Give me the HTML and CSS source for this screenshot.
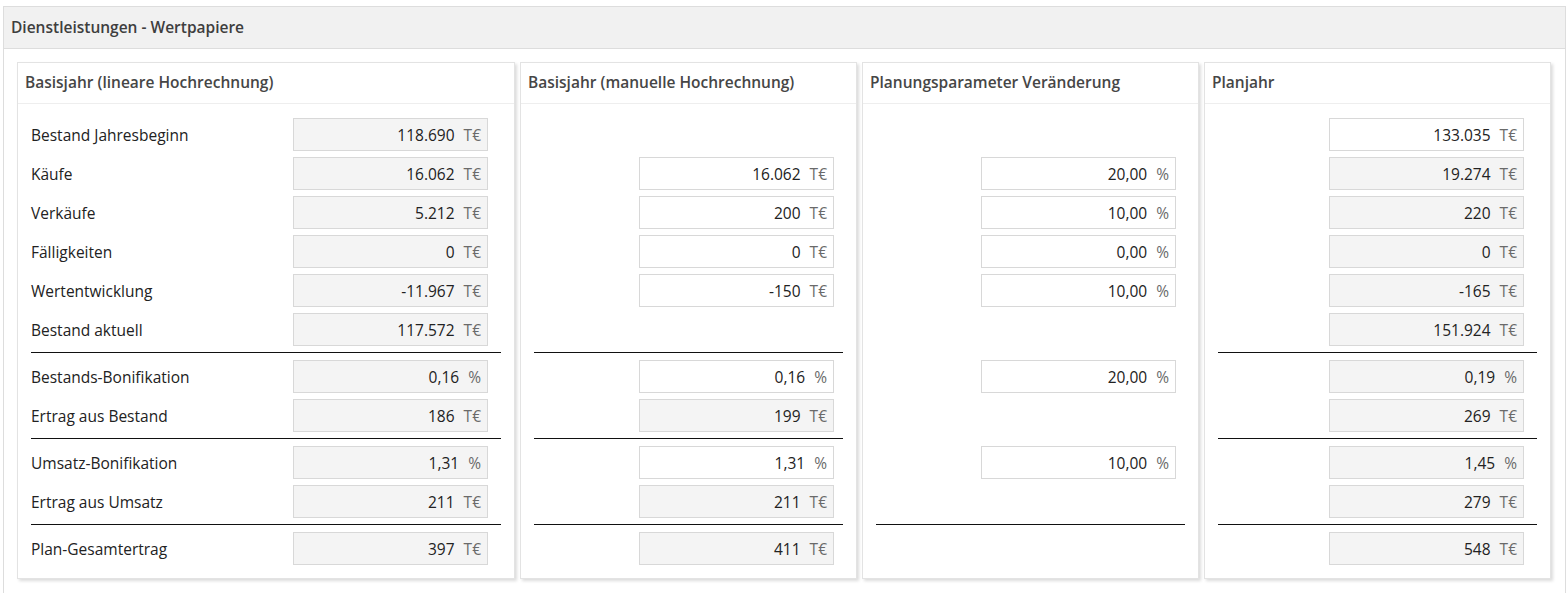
FILE: index.html
```html
<!DOCTYPE html>
<html lang="de">
<head>
    <meta charset="UTF-8">
    <meta name="viewport" content="width=device-width, initial-scale=1.0">
    <title>Dienstleistungen - Wertpapiere</title>
    <link rel="stylesheet" href="styles.css">
</head>
<body>
    <div class="card">
        <div class="card-head">Dienstleistungen - Wertpapiere</div>
        <div class="card-body">

            <!-- Basisjahr linear -->
            <div class="panel panel-base">
                <div class="panel-head">Basisjahr (lineare Hochrechnung)</div>
                <div class="panel-body">
                    <div class="row"><span class="label">Bestand Jahresbeginn</span><div class="field ro"><span class="num">118.690</span><span class="unit">T€</span></div></div>
                    <div class="row"><span class="label">Käufe</span><div class="field ro"><span class="num">16.062</span><span class="unit">T€</span></div></div>
                    <div class="row"><span class="label">Verkäufe</span><div class="field ro"><span class="num">5.212</span><span class="unit">T€</span></div></div>
                    <div class="row"><span class="label">Fälligkeiten</span><div class="field ro"><span class="num">0</span><span class="unit">T€</span></div></div>
                    <div class="row"><span class="label">Wertentwicklung</span><div class="field ro"><span class="num">-11.967</span><span class="unit">T€</span></div></div>
                    <div class="row"><span class="label">Bestand aktuell</span><div class="field ro"><span class="num">117.572</span><span class="unit">T€</span></div></div>
                    <div class="sep"></div>
                    <div class="row"><span class="label">Bestands-Bonifikation</span><div class="field ro"><span class="num">0,16</span><span class="unit">%</span></div></div>
                    <div class="row"><span class="label">Ertrag aus Bestand</span><div class="field ro"><span class="num">186</span><span class="unit">T€</span></div></div>
                    <div class="sep"></div>
                    <div class="row"><span class="label">Umsatz-Bonifikation</span><div class="field ro"><span class="num">1,31</span><span class="unit">%</span></div></div>
                    <div class="row"><span class="label">Ertrag aus Umsatz</span><div class="field ro"><span class="num">211</span><span class="unit">T€</span></div></div>
                    <div class="sep"></div>
                    <div class="row"><span class="label">Plan-Gesamtertrag</span><div class="field ro"><span class="num">397</span><span class="unit">T€</span></div></div>
                </div>
            </div>

            <!-- Basisjahr manuell -->
            <div class="panel panel-narrow">
                <div class="panel-head">Basisjahr (manuelle Hochrechnung)</div>
                <div class="panel-body">
                    <div class="row"></div>
                    <div class="row"><div class="field"><span class="num">16.062</span><span class="unit">T€</span></div></div>
                    <div class="row"><div class="field"><span class="num">200</span><span class="unit">T€</span></div></div>
                    <div class="row"><div class="field"><span class="num">0</span><span class="unit">T€</span></div></div>
                    <div class="row"><div class="field"><span class="num">-150</span><span class="unit">T€</span></div></div>
                    <div class="row"></div>
                    <div class="sep"></div>
                    <div class="row"><div class="field"><span class="num">0,16</span><span class="unit">%</span></div></div>
                    <div class="row"><div class="field ro"><span class="num">199</span><span class="unit">T€</span></div></div>
                    <div class="sep"></div>
                    <div class="row"><div class="field"><span class="num">1,31</span><span class="unit">%</span></div></div>
                    <div class="row"><div class="field ro"><span class="num">211</span><span class="unit">T€</span></div></div>
                    <div class="sep"></div>
                    <div class="row"><div class="field ro"><span class="num">411</span><span class="unit">T€</span></div></div>
                </div>
            </div>

            <!-- Planungsparameter -->
            <div class="panel panel-narrow">
                <div class="panel-head">Planungsparameter Veränderung</div>
                <div class="panel-body">
                    <div class="row"></div>
                    <div class="row"><div class="field"><span class="num">20,00</span><span class="unit">%</span></div></div>
                    <div class="row"><div class="field"><span class="num">10,00</span><span class="unit">%</span></div></div>
                    <div class="row"><div class="field"><span class="num">0,00</span><span class="unit">%</span></div></div>
                    <div class="row"><div class="field"><span class="num">10,00</span><span class="unit">%</span></div></div>
                    <div class="row"></div>
                    <div class="sep blank"></div>
                    <div class="row"><div class="field"><span class="num">20,00</span><span class="unit">%</span></div></div>
                    <div class="row"></div>
                    <div class="sep blank"></div>
                    <div class="row"><div class="field"><span class="num">10,00</span><span class="unit">%</span></div></div>
                    <div class="row"></div>
                    <div class="sep"></div>
                    <div class="row"></div>
                </div>
            </div>

            <!-- Planjahr -->
            <div class="panel panel-plan">
                <div class="panel-head">Planjahr</div>
                <div class="panel-body">
                    <div class="row"><div class="field"><span class="num">133.035</span><span class="unit">T€</span></div></div>
                    <div class="row"><div class="field ro"><span class="num">19.274</span><span class="unit">T€</span></div></div>
                    <div class="row"><div class="field ro"><span class="num">220</span><span class="unit">T€</span></div></div>
                    <div class="row"><div class="field ro"><span class="num">0</span><span class="unit">T€</span></div></div>
                    <div class="row"><div class="field ro"><span class="num">-165</span><span class="unit">T€</span></div></div>
                    <div class="row"><div class="field ro"><span class="num">151.924</span><span class="unit">T€</span></div></div>
                    <div class="sep"></div>
                    <div class="row"><div class="field ro"><span class="num">0,19</span><span class="unit">%</span></div></div>
                    <div class="row"><div class="field ro"><span class="num">269</span><span class="unit">T€</span></div></div>
                    <div class="sep"></div>
                    <div class="row"><div class="field ro"><span class="num">1,45</span><span class="unit">%</span></div></div>
                    <div class="row"><div class="field ro"><span class="num">279</span><span class="unit">T€</span></div></div>
                    <div class="sep"></div>
                    <div class="row"><div class="field ro"><span class="num">548</span><span class="unit">T€</span></div></div>
                </div>
            </div>

        </div>
    </div>
</body>
</html>
```

FILE: styles.css
```css
* {
    margin: 0;
    padding: 0;
    box-sizing: border-box;
    font-family: 'Open Sans', 'Liberation Sans', sans-serif;
}
body {
    background: #fff;
    color: #222;
    font-size: 15.5px;
}
.card {
    margin: 6px 0 0 3px;
    width: 1563px;
    border: 1px solid #ddd;
}
.card-head {
    height: 42px;
    padding: 0 7px 1px;
    display: flex;
    align-items: center;
    background: #f1f1f1;
    border-bottom: 1px solid #ddd;
    font-weight: 600;
    color: #3e3e3e;
}
.card-body {
    display: flex;
    gap: 5px;
    padding: 13px 14px 20px 13px;
}
.panel {
    border: 1px solid #e3e3e3;
    box-shadow: 2px 2px 3px rgba(0, 0, 0, 0.14);
    background: #fff;
}
.panel-base { width: 498px; }
.panel-narrow { width: 337px; }
.panel-plan { width: 347px; }
.panel-head {
    height: 41px;
    padding: 0 7px 2px;
    display: flex;
    align-items: center;
    border-bottom: 1px solid #eee;
    font-weight: 600;
    color: #464646;
}
.panel-body {
    padding: 14px 13px 13px;
}
.row {
    display: flex;
    align-items: center;
    height: 33px;
    margin-bottom: 6px;
}
.row:last-child {
    margin-bottom: 0;
}
.label {
    flex: 1;
    color: #222;
}
.field {
    margin-left: auto;
    width: 195px;
    height: 33px;
    display: flex;
    align-items: center;
    justify-content: flex-end;
    padding-right: 6px;
    border: 1px solid #d8d8d8;
    background: #fff;
}
.panel-base .field,
.panel-plan .field {
    margin-right: 13px;
}
.panel-narrow .field {
    margin-right: 9px;
}
.field.ro {
    background: #f4f4f4;
}
.num {
    color: #222;
}
.unit {
    margin-left: 9px;
    color: #6a6a6a;
}
.sep {
    height: 1px;
    background: #111;
    margin: 0 0 7px;
}
.sep.blank {
    background: transparent;
}
```
